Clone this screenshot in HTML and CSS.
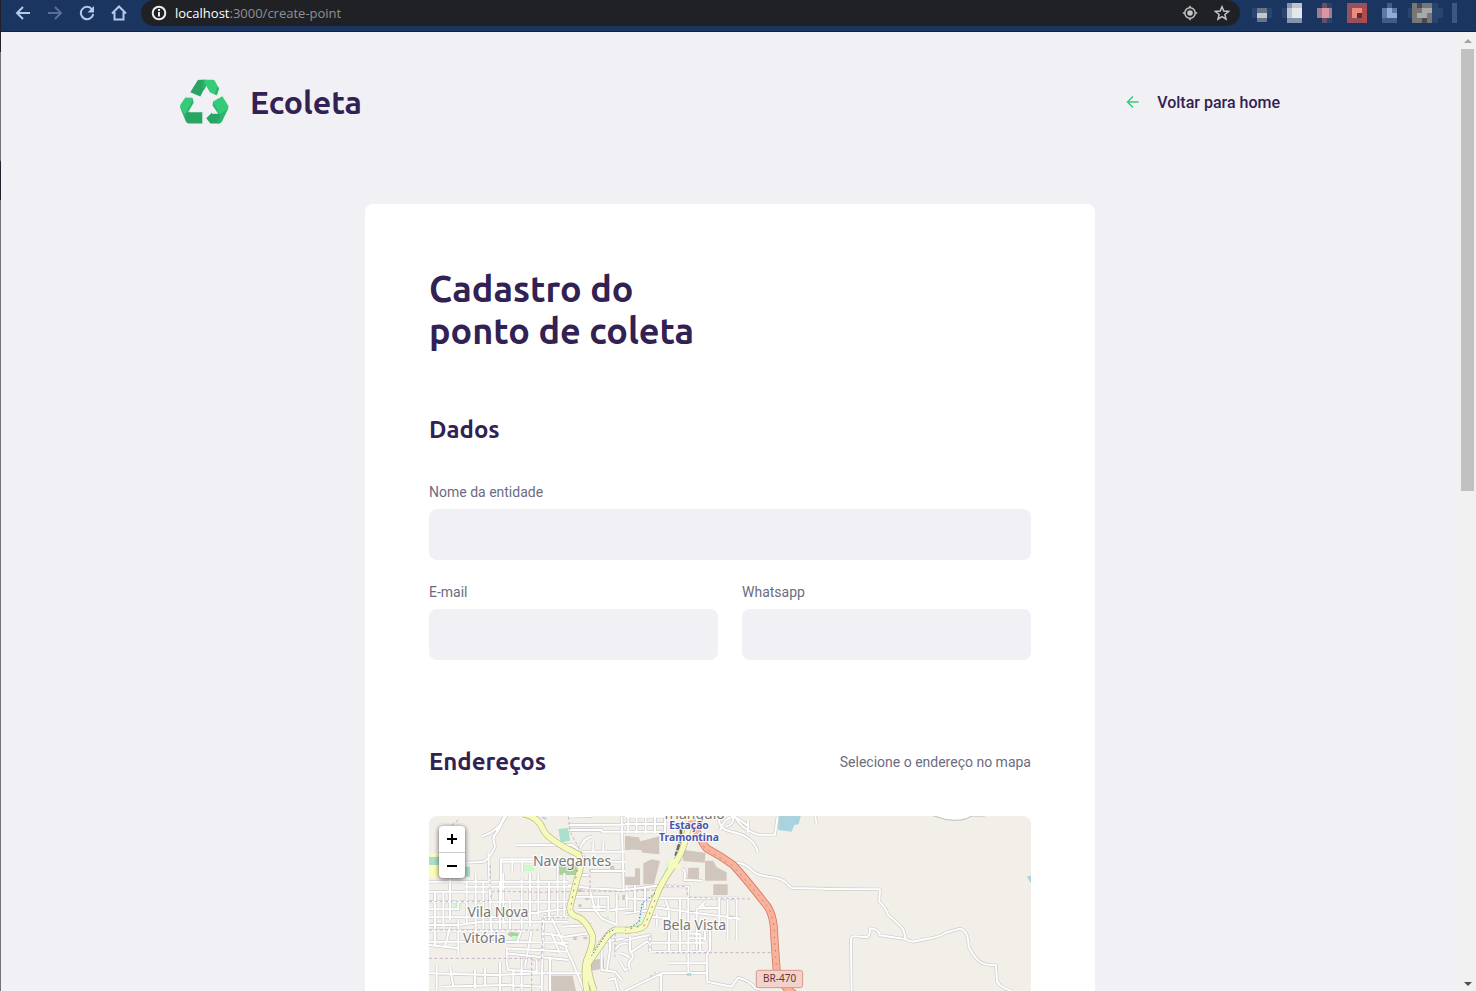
FILE: index.html
```html
<!DOCTYPE html>
<html lang="pt-BR">
<head>
<meta charset="utf-8">
<title>Ecoleta</title>
<link rel="stylesheet" href="styles.css">
</head>
<body>
<div class="toolbar">
  <nav class="nav-buttons" aria-label="Navegador">
    <button type="button" aria-label="Voltar"><svg viewBox="0 0 16 16"><path d="M15 8H2M8 2L2 8l6 6"/></svg></button>
    <button type="button" class="disabled" aria-label="Avançar"><svg viewBox="0 0 16 16"><path d="M1 8h13M8 2l6 6-6 6"/></svg></button>
    <button type="button" aria-label="Recarregar"><svg viewBox="0 0 16 16"><path d="M13 4.300A6.200 6.200 0 1 0 14.200 9"/><path class="solid" d="M15 1v6.500H8.500z"/></svg></button>
    <button type="button" aria-label="Página inicial"><svg viewBox="0 0 16 16"><path d="M1 8.500L8 1.500l7 7M3.500 7v7.500h9V7"/></svg></button>
  </nav>
  <div class="address">
    <svg class="info" viewBox="0 0 16 16"><circle cx="8" cy="8" r="6.300"/><path d="M8 7v4.500M8 4v2"/></svg>
    <span class="url"><b>localhost</b>:3000/create-point</span>
    <button type="button" aria-label="Localização"><svg viewBox="0 0 16 16"><circle cx="8" cy="8" r="5.200"/><circle class="solid" cx="8" cy="8" r="2.800"/><path d="M8 .8v2M8 13.200v2M.8 8h2M13.200 8h2"/></svg></button>
    <button type="button" aria-label="Favorito"><svg viewBox="0 0 16 16"><path d="M8 1.800l1.800 4.300 4.700.4-3.600 3 1.100 4.600L8 11.700l-4 2.400 1.100-4.600-3.600-3 4.700-.4z"/></svg></button>
  </div>
  <svg class="extensions" viewBox="0 0 224 32" shape-rendering="crispEdges">
    <path fill="#29456d" d="M0 8h20v10H0zM30 8h5v10h-5zM65 8h5v10h-5zM75 3h5v5h-5zM75 18h5v5h-5zM135 8h5v10h-5zM156 8h35v10h-35zM161 3h25v20h-25z"/>
    <path fill="#66758b" d="M5 8h10v5H5zM5 18h10v4H5z"/><path fill="#c4c6c8" d="M5 13h10v5H5z"/>
    <path fill="#8494ae" d="M35 3h15v20H35z"/><path fill="#e6e7eb" d="M40 8h10v10H40z"/><path fill="#bcc5d3" d="M35 8h5v10h-5zM40 3h10v5H40z"/>
    <path fill="#a27b90" d="M65 8h15v10H65z"/><path fill="#d898a3" d="M70 8h7v10h-7z"/><path fill="#62506c" d="M70 3h5v5h-5zM70 18h5v5h-5z"/>
    <path fill="#984f5e" d="M95 3h20v20H95z"/><path fill="#ed8b7f" d="M100 8h10v10h-10z"/><path fill="#5a3029" d="M105 13h5v5h-5z"/><path fill="#b34b4c" d="M110 8h5v15h-5z"/>
    <path fill="#5e7ba7" d="M130 8h15v10h-15z"/><path fill="#91add6" d="M135 8h5v10h-5zM140 13h5v5h-5z"/><path fill="#405d89" d="M135 3h5v5h-5zM130 18h15v5h-15z"/>
    <path fill="#777778" d="M160 3h20v20h-20z"/><path fill="#aaa9a9" d="M170 8h10v5h-10zM165 13h10v5h-10z"/><path fill="#484b50" d="M165 3h5v5h-5zM170 18h5v5h-5z"/>
    <path fill="#3d5880" d="M200 3h5v20h-5z"/>
  </svg>
</div>
<div class="viewport">
  <main class="page">
    <header class="header">
      <div class="logo">
        <svg viewBox="5 8 147 135" aria-hidden="true">
          <path fill="#2aa463" d="M36 46l21-34q2-3 7-3h14l6 15-18 35z"/>
          <path fill="#2bb56c" d="M74 9h8l4 14-8 16-6-10z"/>
          <path fill="#34cb79" d="M78 9h26q4 0 6 4l12 22-7 20-20-8-14-25z"/>
          <path fill="#2bb56c" d="M115 55l7-20-4-7-9 24z"/>
          <path fill="#2bb56c" d="M6 88l18 19 10-3-10 34-17-42q-2-4-1-8z"/>
          <path fill="#34cb79" d="M21 62l21 1 3 9-22 37-4 3L7 92q-3-5 0-10z"/>
          <path fill="#2bb56c" d="M42 63l4 15-17 28-7 2 20-36z"/>
          <path fill="#2aa463" d="M25 106h47v34H31q-5 0-7-5l-4-14z"/>
          <path fill="#2bb56c" d="M104 74l-1 12 18 27 8-8z"/>
          <path fill="#34cb79" d="M104 74l28-16 17 27q3 5 0 11l-19 29z"/>
          <path fill="#2aa463" d="M84 124l17-17v4h24l5 8-8 21H96z"/>
          <path fill="#2bb56c" d="M117 140l10-29 23-17-19 40q-3 6-9 6z"/>
        </svg>
        <span>Ecoleta</span>
      </div>
      <a class="back" href="#"><svg viewBox="0 0 16 16"><path d="M13.500 8h-11M8 2.500L2.500 8 8 13.500"/></svg>Voltar para home</a>
    </header>
    <form class="card">
      <h1>Cadastro do<br>ponto de coleta</h1>
      <section>
        <h2>Dados</h2>
        <div class="field"><label for="name">Nome da entidade</label><input id="name" type="text"></div>
        <div class="row">
          <div class="field"><label for="email">E-mail</label><input id="email" type="email"></div>
          <div class="field"><label for="whats">Whatsapp</label><input id="whats" type="text"></div>
        </div>
      </section>
      <section>
        <div class="legend"><h2>Endereços</h2><span>Selecione o endereço no mapa</span></div>
        <div class="map">
          <svg class="tiles" viewBox="0 0 602 350" preserveAspectRatio="xMidYMin slice">
            <defs>
              <path id="west" d="M240 15L205 85L210 110Q190 155 170 156L120 158M245 15Q225 60 170 80M240 15Q225 60 205 80M270 106L440 104L460 118M430 45L600 44M430 60L530 60L530 65H615M430 20L500 18M590 20L596 240M465 115Q475 85 500 80M470 125H600M505 95V125M535 95V125M490 155H600M495 183H600M470 195H490M228 270V148H400M228 155H330M262 150V185M292 150V185M190 130L200 390M152 190V400M12 215H430M12 245H190M120 230H440M12 275H430M12 298H100V270M12 322H200L440 295M12 345H100L170 335H430M12 362H300M12 395H150L430 398M30 245V410M55 245V350M75 205V330M75 350L60 410M100 330V435M12 405L100 415M125 215V345M152 245V330M175 215V380M225 215V360M235 190V340M255 270V360M290 205V360M315 190V350M340 190V320M372 215V330M398 165V320M418 190V320M430 225L495 235L600 240M435 260H550V300M520 265V300M495 240L510 300L530 325L575 345M575 250V345M555 300L615 295M500 290H545M460 300H540M355 320H430M355 320L350 543M290 360L275 400M320 360L300 470M380 325L440 450L478 543M380 370L405 430M355 370L420 380L490 370M410 350L500 345M245 415L430 425M245 415V455L250 480L340 485M245 430L430 450M12 490L200 495L360 490L470 490M52 530L240 525L350 530M35 465V540M75 470L85 530M150 480V535M180 475V525M225 455V543M265 480V543M290 440V543M335 450V490M375 440V543M400 400L430 410M515 400L600 385M530 390V480L570 485L590 510M555 360L555 420L545 485M570 420Q590 390 615 405M580 430Q600 430 615 445M585 455L600 480L615 475M550 510L570 505L580 543"/>
              <path id="middle" d="M0 20H120M0 42H125M0 65H110M10 20V70M35 20V70M62 20V70M90 20V70M120 20V100M280 15Q280 60 320 65Q390 80 398 128M285 60Q300 20 330 20Q350 60 400 74H450L458 20M305 50Q330 40 325 20M370 30L368 70M330 20L372 50M570 15L575 42M170 175Q185 180 178 210L232 212M325 165Q338 150 375 175Q390 195 430 200Q475 203 490 225L500 234L610 236M0 240L90 228L190 230V262M0 265L100 270M0 310L80 300M5 225V290M30 225V310M60 235V295M75 290L220 310L350 326M80 265H340M120 270Q135 285 132 350V425M165 265V425M190 265V490M215 295V420M240 275L220 295L280 293M230 280L240 295M283 265V350M308 265V388M335 265V390M95 310V350M75 320L130 325M0 390L75 375V425M15 380V420L25 440L10 460L15 480M20 425L65 395L75 400M75 398H240M75 425H240M130 460H245M0 543L110 490L245 488M108 490V543M190 370L225 372V425M190 385H240M240 350V390M255 350V420L245 435L247 515L320 530L340 503Q380 515 390 535L405 538"/>
              <path id="east" d="M0 237L165 238L163 275Q180 290 190 315Q215 335 235 358L243 390M80 543L78 390Q78 378 90 379L125 382Q136 378 135 355Q158 355 165 376L240 387Q255 397 270 394Q300 388 315 385Q345 380 360 369Q390 360 405 356Q430 360 431 410Q442 430 455 447Q470 466 513 466L516 515Q528 533 560 543"/>
              <path id="avenue" d="M295 12Q340 20 355 60Q370 90 460 133Q475 160 457 205Q450 230 436 285Q430 310 450 318Q480 325 502 375Q507 400 485 450Q475 480 485 543M615 360H570Q555 365 535 395Q500 445 490 460Q488 490 508 543"/>
              <path id="avenue2" d="M195 15Q185 110 150 160Q110 215 93 260Q75 310 60 345Q50 360 0 361"/>
              <path id="highway" d="M200 30Q222 85 245 115Q290 140 325 165Q370 215 420 280Q448 310 448 380L455 480Q465 530 520 560"/>
            </defs>
            <rect class="land" width="602" height="350"/>
            <g transform="translate(-4 -6) scale(.3333)">
              <path class="park" d="M400 57l30-3 5 38-28 5zM12 140h30v25H12zM120 170h15v30h-15z"/>
              <path fill="#fdfcb8" d="M12 130h60v10H12zM12 165h60v38H12z"/>
              <path class="forest" d="M395 165h60v30h-62zM255 365l30 5-8 22-30-18z"/>
              <path class="green" d="M298 165h30v18h-30zM85 280h25v15H85zM260 378h22v16h-22zM538 320h14v10h-14z"/>
              <path class="building" d="M378 497h65l10 46h-75zM505 450l32-5v30l-50 10zM600 78h15v42h-15zM555 167h13v12h-13zM458 238h14v8h-14zM480 258h12v12h-12zM460 283h10v8h-10zM570 260h12v10h-12zM445 378h10v12h-10zM475 380h12v8h-12zM592 255h10v15h-10z"/>
              <use href="#west" class="casing"/><use href="#west" class="road"/>
              <path class="track" d="M12 275H190L205 243L350 247L495 243L600 245M12 360H350L355 322H430M12 445H320V543M430 20L435 65L465 120L495 160V240M320 450H350L355 360M100 30L75 50M195 165V240M570 370V440"/>
              <path class="green" d="M487 475l12 68h-15z"/>
              <use href="#avenue" class="avenue-casing"/><use href="#avenue" class="avenue"/>
              <path class="cycle" d="M565 360L545 370L500 437"/><path class="centerline" d="M460 160L436 300"/>
              <path class="water" d="M353 20l12 4-2 5-12-4z"/>
              <g transform="translate(600 0)">
                <path class="water" d="M460 15h68l-7 28-13 2-8 20-40-5z"/>
                <path class="building" d="M0 78l42 4 4 12 57-15v54l-50-5-5-8-48-2zM175 120l67 8-3 30-65-5zM190 173h32v35h-35zM240 152h25l10 20 30 15v25h-65zM265 223h43v32h-43zM55 160l25-12 25 5-18 70H55zM0 200h30v-25h15v50H0zM207 378h18v12h-18z"/>
                <path class="green" d="M130 155l10 5-45 110-42 10-8 75-45 5 42-25 6-55 42-30z"/>
                <use href="#middle" class="casing"/><use href="#middle" class="road"/>
                <path class="track" d="M0 243L90 240L100 228L185 230L190 262L375 267M92 428H440M75 375V425"/>
                <path class="rail" d="M168 55V85L152 138"/>
                <use href="#avenue2" class="avenue-casing"/><use href="#avenue2" class="avenue"/>
                <path class="plaza" d="M132 152l30-10-3 17 12 14-28 3-15 8z"/>
                <path class="cycle" d="M90 250L52 280L42 335L15 353"/><path class="centerline" d="M90 270L60 345L0 361"/>
                <use href="#highway" class="highway-casing"/><use href="#highway" class="highway"/><path class="centerline" d="M220 95Q250 125 320 165Q390 240 420 280Q448 310 448 380L455 480"/>
                <path class="water" d="M185 490h14v7h-14zM75 497l8-4-4 10zM88 487l6-2-4 8z"/>
                <rect class="shield" x="394" y="481" width="139" height="52" rx="7"/>
                <text class="route" x="464" y="517">BR-470</text>
                <text class="place" x="206" y="27">Triângulo</text>
                <text class="station" x="192" y="56">Estação</text><text class="station" x="192" y="92">Tramontina</text>
                <text class="place" x="208" y="360">Bela Vista</text>
              </g>
              <g transform="translate(1200 0)">
                <use href="#east" class="casing"/><use href="#east" class="road"/>
                <path d="M318 15L365 29Q415 36 440 18H480" fill="#fff" stroke="#bbb" stroke-width="3"/>
                <path class="water" d="M606 200q12-5 18 0v30z"/>
              </g>
              <text class="place" x="441" y="167">Navegantes</text><text class="place" x="219" y="320">Vila Nova</text><text class="place" x="178" y="398">Vitória</text>
            </g>
          </svg>
          <div class="zoom"><button type="button" aria-label="Aproximar"><svg viewBox="0 0 16 16"><path d="M3 8h10M8 3v10"/></svg></button><button type="button" aria-label="Afastar"><svg viewBox="0 0 16 16"><path d="M3 8h10"/></svg></button></div>
        </div>
      </section>
    </form>
  </main>
  <div class="scrollbar" aria-hidden="true"><span class="arrow up"></span><span class="thumb"></span><span class="arrow down"></span></div>
</div>
</body>
</html>
```
FILE: styles.css
```css
* { box-sizing: border-box; margin: 0; padding: 0; }
body {
  display: flex; flex-direction: column; height: 100vh; padding-left: 1px; overflow: hidden;
  background: linear-gradient(#202227 52px, #74747a 52px 160px, #202430 162px 200px, #74747a 200px);
  color: #6c6c80; font-family: Roboto, sans-serif; font-size: 14px;
}
button { border: 0; background: none; }
svg { display: block; }
.toolbar { display: flex; flex: none; align-items: flex-start; height: 32px; padding-left: 14px; background: #1a355f; border-bottom: 1px solid #0c2448; }
.nav-buttons { display: flex; gap: 16px; padding-top: 5px; }
.nav-buttons svg, .address svg { width: 16px; height: 16px; fill: none; stroke: #b4c9ed; stroke-width: 2; }
.nav-buttons .solid { fill: #b4c9ed; stroke: none; }
.nav-buttons .disabled { opacity: .4; }
.address { display: flex; flex: 1; align-items: center; gap: 16px; height: 26px; margin-left: 14px; padding: 0 10px; border-radius: 14px; background: #202124; }
.address svg { stroke: #c4c5c7; stroke-width: 1.5; }
.address .info { stroke: #eee; stroke-width: 2; }
.address .solid { fill: #c4c5c7; stroke: none; }
.url { flex: 1; margin-left: -8px; color: #8f9194; font: 13px "Open Sans", sans-serif; }
.url b { color: #fff; font-weight: 400; }
.extensions { flex: none; width: 224px; height: 32px; margin-left: 12px; }
.viewport { display: flex; flex: 1; min-height: 0; }
.page { flex: 1; min-width: 0; overflow: hidden; background: #f0f0f5; }
.header { display: flex; align-items: center; justify-content: space-between; max-width: 1100px; margin: 0 auto; padding-top: 47px; }
.logo { display: flex; align-items: center; gap: 21px; color: #322153; font: 700 32px/46px Ubuntu, "Noto Sans", sans-serif; }
.logo svg { width: 49px; height: 46px; }
.back { display: flex; align-items: center; gap: 16px; color: #322153; font-size: 16px; font-weight: 500; text-decoration: none; }
.back svg { width: 16px; height: 16px; fill: none; stroke: #34cb79; stroke-width: 1.5; }
.card { max-width: 730px; margin: 79px auto 0; padding: 64px; border-radius: 8px; background: #fff; }
h1, h2 { color: #322153; font-family: Ubuntu, "Noto Sans", sans-serif; font-weight: 700; }
h1 { font-size: 36px; line-height: 42px; }
h2 { font-size: 24px; line-height: 28px; }
section { margin-top: 64px; }
section > h2 { margin-bottom: 39px; }
section + section { margin-top: 88px; }
.field { display: flex; flex: 1; flex-direction: column; gap: 8px; min-width: 0; }
.field label { line-height: 18px; }
.field input { width: 100%; height: 51px; padding: 16px 24px; border: 0; border-radius: 8px; background: #f0f0f5; font: 16px Roboto, sans-serif; }
.row { display: flex; gap: 24px; margin-top: 23px; }
.legend { display: flex; align-items: center; justify-content: space-between; margin-bottom: 40px; }
.map { position: relative; height: 350px; overflow: hidden; border-radius: 8px; }
.tiles { width: 100%; height: 100%; }
.zoom { position: absolute; top: 10px; left: 10px; width: 26px; border-radius: 4px; background: #fff; box-shadow: 0 1px 5px rgba(0, 0, 0, .65); }
.zoom button { display: grid; place-items: center; width: 26px; height: 26px; }
.zoom button + button { border-top: 1px solid #ccc; }
.zoom svg { width: 16px; height: 16px; fill: none; stroke: #000; stroke-width: 2; }
.scrollbar { display: flex; flex: none; flex-direction: column; width: 17px; padding: 7px 2px 5px; background: #f1f1f1; }
.thumb { height: 442px; margin-top: 6px; background: #c1c1c1; }
.arrow { align-self: center; border: 4px solid transparent; }
.up { border-top: 0; border-bottom-color: #a3a3a3; }
.down { margin-top: auto; border-bottom: 0; border-top-color: #505050; }
.land { fill: #f2efe9; }
.park { fill: #aae0cb; }
.forest { fill: #add19e; }
.green { fill: #c8facc; }
.water { fill: #aad3df; }
.building { fill: #d1c6bd; }
.casing, .road, .avenue-casing, .avenue, .highway-casing, .highway, .track, .cycle, .centerline, .rail { fill: none; stroke-linejoin: round; }
.casing { stroke: #ccc; stroke-width: 10; }
.road { stroke: #fff; stroke-width: 6; }
.avenue-casing { stroke: #b5bb76; stroke-width: 20; }
.avenue { stroke: #f7fabf; stroke-width: 16; }
.plaza { fill: #f7fabf; }
.highway-casing { stroke: #dc7963; stroke-width: 24; }
.highway { stroke: #f9b29c; stroke-width: 19; }
.track { stroke: #c9b4c9; stroke-width: 3; stroke-dasharray: 9 7; }
.cycle { stroke: #3c50e8; stroke-width: 3; stroke-dasharray: 4 6; }
.centerline { stroke: #a78f92; stroke-width: 3; stroke-dasharray: 6 14; }
.rail { stroke: #666; stroke-width: 8; stroke-dasharray: 20 4; }
.place, .station, .route { font-family: "Noto Sans", sans-serif; text-anchor: middle; paint-order: stroke; stroke: #fff; stroke-width: 7; stroke-opacity: .8; }
.place { fill: #777; font-size: 42px; }
.station { fill: #4a55b0; font-size: 31px; font-weight: 700; }
.shield { fill: #f1d3cc; stroke: #d79889; stroke-width: 3; }
.route { fill: #6d3030; font-size: 30px; stroke: none; }
```
